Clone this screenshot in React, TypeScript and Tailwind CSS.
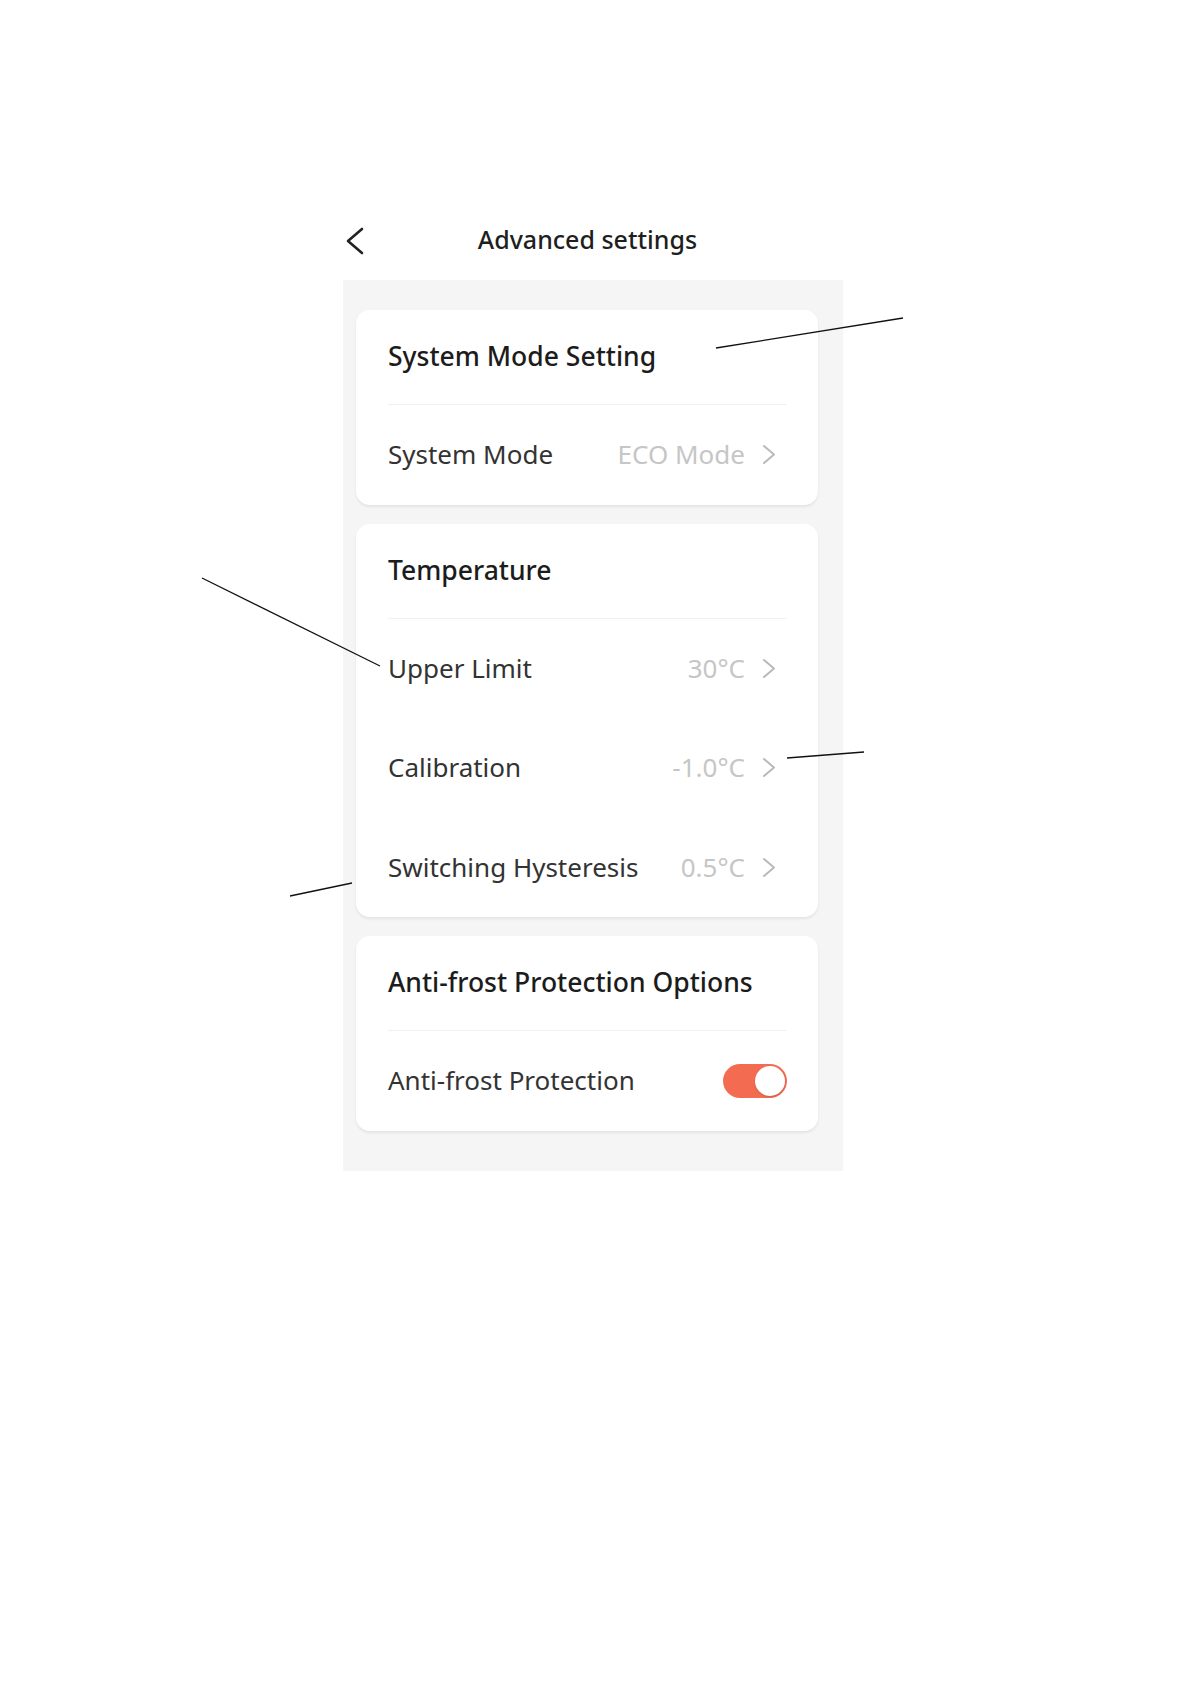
import React from 'react';

const font = "font-['Noto_Sans','Liberation_Sans',sans-serif]";

const Chevron: React.FC = () => (
    <svg width="14" height="21" viewBox="0 0 14 21" className="ml-[17px] mr-[11px] shrink-0">
        <polyline points="2,2 12,10.5 2,19" fill="none" stroke="#b9b9b9" strokeWidth="2" strokeLinecap="round" strokeLinejoin="round" />
    </svg>
);

const Row: React.FC<{ label: string; value?: string; toggle?: boolean }> = ({ label, value, toggle }) => (
    <div className="flex items-center h-[99.5px]">
        <span className="flex-1 text-[26px] text-[#333333]">{label}</span>
        {toggle ? (
            <div className="w-[64px] h-[34px] rounded-full bg-[#f36c51] flex items-center justify-end pr-[2px]">
                <div className="w-[30px] h-[30px] rounded-full bg-white shadow-[0_1px_2px_rgba(0,0,0,0.15)]" />
            </div>
        ) : (
            <>
                <span className="text-[26px] text-[#c6c6c6]">{value}</span>
                <Chevron />
            </>
        )}
    </div>
);

const Card: React.FC<{ title: string; children: React.ReactNode }> = ({ title, children }) => (
    <div className="bg-white rounded-[14px] shadow-[0_2px_3px_rgba(0,0,0,0.07)] pl-[32px] pr-[31px]">
        <div className="h-[94px] flex items-center">
            <span className="text-[26.5px] font-medium text-[#1c1c1c]">{title}</span>
        </div>
        <div className="h-px bg-[#f1f1f1]" />
        {children}
    </div>
);

export default function App() {
    return (
        <div className={`relative w-[1191px] h-[1684px] bg-white ${font}`}>
            <div className="ml-[343px] pt-[212px] w-[500px]">

                {/* Header */}
                <div className="flex items-center h-[56px]">
                    <svg width="24" height="28" viewBox="0 0 24 28" className="shrink-0 mt-[2px]">
                        <polyline points="19,2 5,14 19,26" fill="none" stroke="#222222" strokeWidth="2.6" strokeLinecap="round" strokeLinejoin="round" />
                    </svg>
                    <div className="flex-1 text-center pr-[35px] text-[25px] font-medium text-[#1f1f1f]">
                        Advanced settings
                    </div>
                </div>

                {/* Body */}
                <div className="mt-[12px] bg-[#f5f5f5] pt-[30px] pb-[40px] pl-[13px] pr-[25px] flex flex-col gap-[19px]">
                    <Card title="System Mode Setting">
                        <Row label="System Mode" value="ECO Mode" />
                    </Card>
                    <Card title="Temperature">
                        <Row label="Upper Limit" value="30°C" />
                        <Row label="Calibration" value="-1.0°C" />
                        <Row label="Switching Hysteresis" value="0.5°C" />
                    </Card>
                    <Card title="Anti-frost Protection Options">
                        <Row label="Anti-frost Protection" toggle />
                    </Card>
                </div>
            </div>

            {/* Annotation leader lines */}
            <svg className="absolute inset-0 pointer-events-none" width="1191" height="1684">
                <line x1="716" y1="348" x2="903" y2="318" stroke="#111" strokeWidth="1.3" />
                <line x1="202" y1="578" x2="380" y2="666" stroke="#111" strokeWidth="1.3" />
                <line x1="787" y1="758" x2="864" y2="752" stroke="#111" strokeWidth="1.3" />
                <line x1="290" y1="896" x2="352" y2="883" stroke="#111" strokeWidth="1.3" />
            </svg>
        </div>
    );
}
